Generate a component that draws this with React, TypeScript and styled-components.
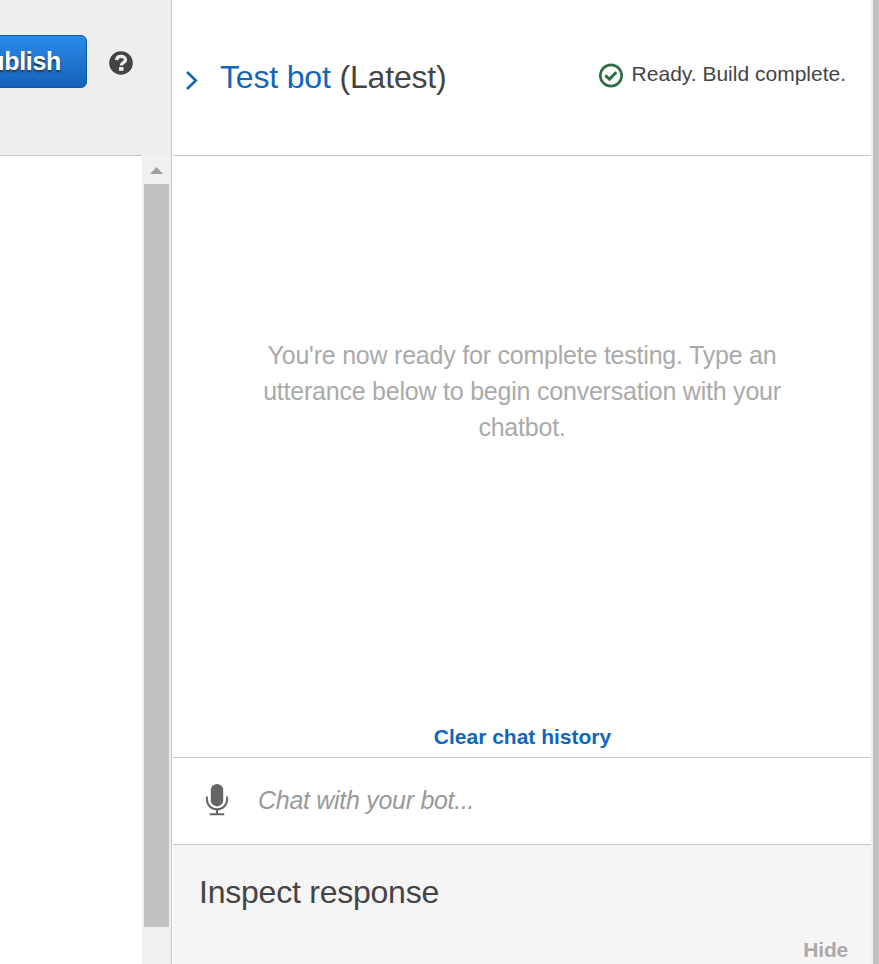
import React from "react";
import styled, { createGlobalStyle } from "styled-components";

const GlobalStyle = createGlobalStyle`
  * { box-sizing: border-box; }
  body {
    margin: 0;
    overflow: hidden;
    background: #fff;
    color: #444;
    font-family: "Liberation Sans", Arial, sans-serif;
  }
  button { font-family: inherit; border: 0; background: none; padding: 0; cursor: pointer; white-space: nowrap; }
  svg { display: block; flex: none; }
`;

const Page = styled.div`
  display: grid;
  grid-template-columns: 171px 702px 6px;
  height: 964px;
  width: 879px;
  overflow: hidden;
`;

const Editor = styled.div`
  display: grid;
  grid-template-rows: 155px 1fr;
  min-width: 0;
`;

const Toolbar = styled.header`
  display: flex;
  align-items: flex-start;
  gap: 21.5px;
  padding-top: 35px;
  background: #eee;
  overflow: hidden;
`;

const PublishButton = styled.button`
  display: flex;
  justify-content: flex-end;
  align-items: center;
  flex: none;
  width: 127px;
  height: 53px;
  margin-left: -40px;
  padding: 0 25px 1px 0;
  border: 1px solid #0f57a8;
  border-radius: 6px;
  background: linear-gradient(#2b8bea, #1462b8);
  color: #fff;
  font-size: 25px;
  letter-spacing: -0.3px;
  font-weight: 700;
  text-shadow: 0 2px 2px #333;
`;

const HelpIcon = styled.svg`
  margin-top: 16px;
`;

const EditorBody = styled.div`
  display: grid;
  grid-template-columns: 142px 29px;
`;

const Canvas = styled.div`
  border-top: 1px solid #c6c6c6;
`;

const ScrollTrack = styled.div`
  display: flex;
  flex-direction: column;
  align-items: center;
  background: #f0f0f0;
`;

const ScrollArrow = styled.svg`
  margin: 12px 0 10px;
`;

const ScrollThumb = styled.div`
  width: 25px;
  height: 743px;
  background: #c1c1c1;
`;

const Panel = styled.section`
  display: grid;
  grid-template-rows: 156px 602px 87px 1fr;
  border-left: 1px solid #c6c6c6;
  border-right: 2px solid #f0f0f0;
  min-width: 0;
`;

const PanelHeader = styled.div`
  display: flex;
  align-items: flex-start;
  margin-left: 1px;
  border-bottom: 1px solid #c6c6c6;
`;

const Chevron = styled.svg`
  margin: 70px 0 0 12px;
`;

const Title = styled.h1`
  margin: 59px 0 0 22px;
  font-size: 32px;
  font-weight: 400;
  letter-spacing: -0.17px;
  line-height: 36px;
  white-space: nowrap;
`;

const BotName = styled.span`
  color: #1166bb;
`;

const Status = styled.div`
  display: flex;
  gap: 9px;
  margin: 62px 25px 0 auto;
  font-size: 21px;
  line-height: 24px;
  white-space: nowrap;
`;

const StatusIcon = styled.svg`
  margin-top: 1px;
`;

const Conversation = styled.div`
  display: flex;
  flex-direction: column;
  justify-content: space-between;
  align-items: center;
  margin-left: 1px;
  padding: 181px 0 7px;
  border-bottom: 1px solid #c6c6c6;
`;

const EmptyMessage = styled.p`
  width: 540px;
  margin: 0;
  color: #aaa;
  font-size: 25px;
  letter-spacing: -0.22px;
  line-height: 36px;
  text-align: center;
`;

const ClearButton = styled.button`
  padding-left: 1px;
  color: #1166bb;
  font-size: 21px;
  font-weight: 700;
  line-height: 26px;
`;

const ChatBar = styled.div`
  display: flex;
  align-items: center;
  margin-left: 1px;
  padding: 0 0 2px 32px;
  border-bottom: 1px solid #c6c6c6;
`;

const ChatInput = styled.input`
  flex: 1;
  margin-left: 29px;
  padding: 0;
  border: 0;
  outline: 0;
  background: none;
  font: italic 25px/36px "Liberation Sans", Arial, sans-serif;
  letter-spacing: -0.29px;
  &::placeholder { color: #999; opacity: 1; }
`;

const Inspector = styled.div`
  display: flex;
  flex-direction: column;
  margin-left: 1px;
  padding: 29px 23px 0 26px;
  background: #f5f5f5;
`;

const InspectorTitle = styled.h2`
  margin: 0;
  font-size: 32px;
  font-weight: 400;
  letter-spacing: -0.23px;
  line-height: 36px;
`;

const HideButton = styled.button`
  align-self: flex-end;
  margin-top: 27px;
  color: #aaa;
  font-size: 21px;
  letter-spacing: -0.2px;
  font-weight: 700;
  line-height: 26px;
`;

const PageScroll = styled.div`
  background: #c1c1c1;
`;

export default function App() {
  return (
    <>
      <GlobalStyle />
      <Page>
        <Editor>
          <Toolbar>
            <PublishButton>Publish</PublishButton>
            <HelpIcon width="24" height="24" viewBox="0 0 24 24">
              <circle cx="12" cy="12" r="11.8" fill="#444" />
              <path d="M7.6 9.2C7.8 6.4 9.5 5.3 12 5.3s4.5 1.3 4.5 3.6c0 2.7-4.2 2.8-4.2 5.6" fill="none" stroke="#eee" strokeWidth="3.3" />
              <rect x="10" y="16.1" width="4.5" height="3.7" fill="#eee" />
            </HelpIcon>
          </Toolbar>
          <EditorBody>
            <Canvas />
            <ScrollTrack>
              <ScrollArrow width="13" height="7" viewBox="0 0 13 7">
                <path d="M0 7L6.5 0L13 7Z" fill="#a0a0a0" />
              </ScrollArrow>
              <ScrollThumb />
            </ScrollTrack>
          </EditorBody>
        </Editor>
        <Panel>
          <PanelHeader>
            <Chevron width="13" height="21" viewBox="0 0 13 21">
              <path d="M2 2L10.8 10.5L2 19" fill="none" stroke="#1166bb" strokeWidth="2.6" />
            </Chevron>
            <Title><BotName>Test bot</BotName> (Latest)</Title>
            <Status>
              <StatusIcon width="24" height="25" viewBox="0 0 24 25">
                <circle cx="12" cy="12.5" r="10.7" fill="none" stroke="#2d6f46" strokeWidth="2.7" />
                <path d="M6.3 12.3L10.5 16.1L17.3 9.3" fill="none" stroke="#2d6f46" strokeWidth="3" />
              </StatusIcon>
              <span>Ready. Build complete.</span>
            </Status>
          </PanelHeader>
          <Conversation>
            <EmptyMessage>
              You're now ready for complete testing. Type an utterance below to begin conversation with your chatbot.
            </EmptyMessage>
            <ClearButton>Clear chat history</ClearButton>
          </Conversation>
          <ChatBar>
            <svg width="24" height="32" viewBox="0 0 24 32">
              <rect x="5.8" y="0" width="12.4" height="22.4" rx="6.2" fill="#666" />
              <path d="M1.9 12.5V15.5a10.1 9.8 0 0 0 20.2 0V12.5M12 25V30M4.7 30.2H19.3" fill="none" stroke="#666" strokeWidth="2" />
            </svg>
            <ChatInput placeholder="Chat with your bot..." />
          </ChatBar>
          <Inspector>
            <InspectorTitle>Inspect response</InspectorTitle>
            <HideButton>Hide</HideButton>
          </Inspector>
        </Panel>
        <PageScroll />
      </Page>
    </>
  );
}
